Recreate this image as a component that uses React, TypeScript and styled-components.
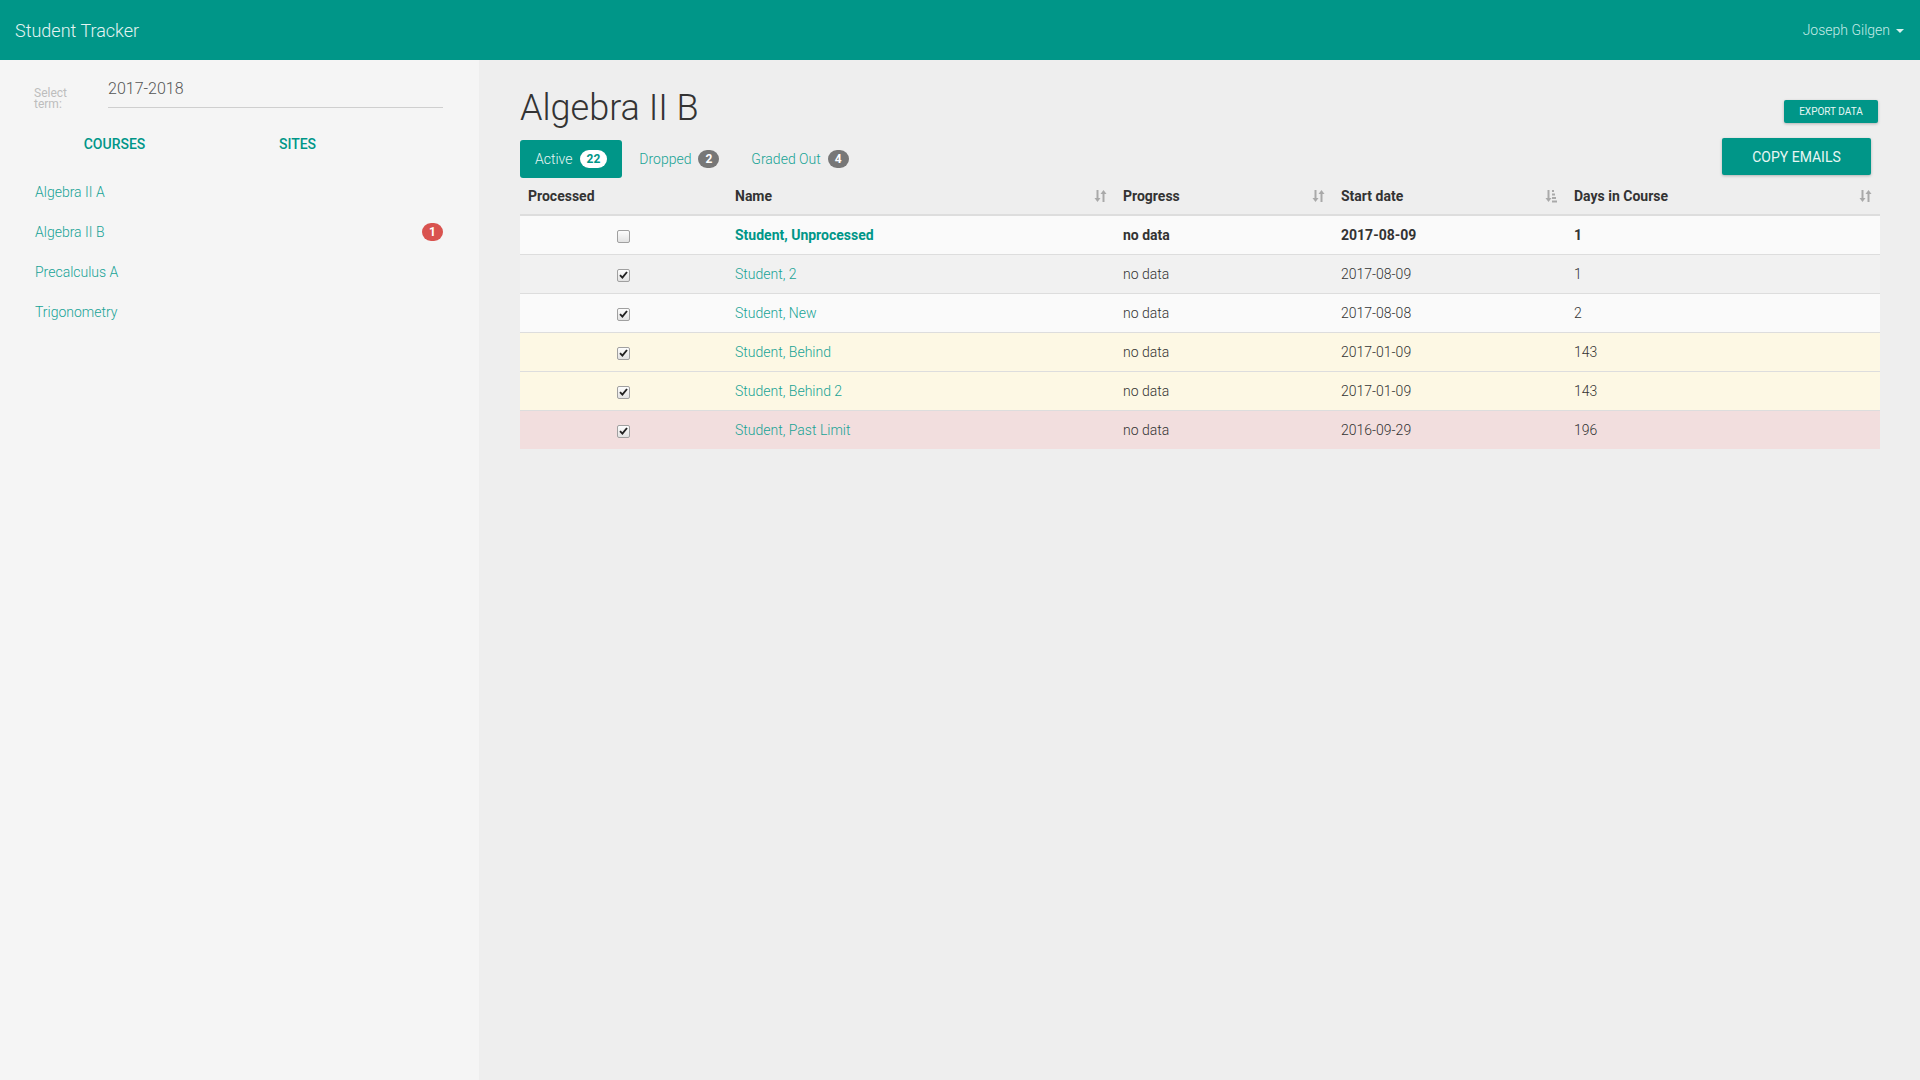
import React from "react";
import styled, { createGlobalStyle } from "styled-components";

const GlobalStyle = createGlobalStyle`
  html, body { margin: 0; padding: 0; }
  body {
    font-family: Roboto, "Noto Sans", "Liberation Sans", Arial, sans-serif;
    background: #eeeeee;
    color: #333;
  }
  * { box-sizing: border-box; }
`;

const TEAL = "#009688";
const LINK = "#17a395";

const Page = styled.div`
  min-height: 100vh;
  display: flex;
  flex-direction: column;
`;

const Navbar = styled.header`
  height: 60px;
  background: ${TEAL};
  display: flex;
  align-items: center;
  justify-content: space-between;
  padding: 0 16px 0 15px;
  flex-shrink: 0;
`;

const Brand = styled.div`
  font-size: 18px;
  font-weight: 300;
  color: #e4f4f2;
`;

const UserMenu = styled.div`
  display: flex;
  align-items: center;
  gap: 6px;
  font-size: 14px;
  font-weight: 300;
  color: #c6ebe7;
`;

const Caret = styled.span`
  width: 0;
  height: 0;
  border-left: 4px solid transparent;
  border-right: 4px solid transparent;
  border-top: 4px solid #d8f1ee;
  margin-top: 2px;
`;

const Body = styled.div`
  flex: 1;
  display: flex;
`;

const Sidebar = styled.aside`
  width: 479px;
  flex-shrink: 0;
  background: #f5f5f5;
  padding: 17px 36px 0 23px;
`;

const TermRow = styled.div`
  display: flex;
  align-items: flex-start;
  padding-left: 11px;
`;

const TermLabel = styled.div`
  width: 74px;
  margin-top: 11px;
  font-size: 12px;
  line-height: 11px;
  color: #bdbdbd;
`;

const TermInput = styled.div`
  flex: 1;
  height: 31px;
  line-height: 24px;
  font-size: 16px;
  font-weight: 300;
  color: #555;
  border-bottom: 1px solid #cfcfcf;
`;

const SideTabs = styled.nav`
  display: flex;
  margin-top: 14px;
`;

const SideTab = styled.div`
  width: 183px;
  height: 40px;
  display: flex;
  align-items: center;
  justify-content: center;
  font-size: 14px;
  font-weight: 500;
  color: ${TEAL};
  text-transform: uppercase;
`;

const CourseList = styled.ul`
  list-style: none;
  margin: 8px 0 0;
  padding: 0;
`;

const CourseItem = styled.li`
  height: 40px;
  display: flex;
  align-items: center;
  justify-content: space-between;
  padding-left: 12px;
  font-size: 14px;
  font-weight: 300;
  color: ${LINK};
`;

const Badge = styled.span<{ $bg: string; $fg: string }>`
  display: inline-flex;
  align-items: center;
  justify-content: center;
  min-width: 20px;
  height: 18px;
  padding: 0 7px;
  border-radius: 10px;
  background: ${(p) => p.$bg};
  color: ${(p) => p.$fg};
  font-size: 12px;
  font-weight: 700;
  line-height: 1;
`;

const Main = styled.main`
  flex: 1;
  background: #eeeeee;
  padding: 26px 40px 0 41px;
`;

const HeaderRow = styled.div`
  display: flex;
  justify-content: space-between;
  align-items: flex-start;
`;

const Title = styled.h1`
  margin: 0;
  font-size: 36px;
  line-height: 44px;
  font-weight: 300;
  color: #333;
`;

const RaisedButton = styled.button<{ $size: "small" | "large" }>`
  border: none;
  border-radius: 2px;
  background: ${TEAL};
  color: #e8f6f4;
  font-family: inherit;
  text-transform: uppercase;
  box-shadow: 0 1px 3px rgba(0, 0, 0, 0.25);
  cursor: pointer;
  ${(p) =>
    p.$size === "small"
      ? `height: 23px; width: 94px; font-size: 10px; margin-top: 14px; margin-right: 2px;`
      : `height: 37px; width: 149px; font-size: 14px; margin-right: 9px;`}
`;

const TabsRow = styled.div`
  display: flex;
  justify-content: space-between;
  align-items: flex-start;
  margin-top: 8px;
`;

const Tabs = styled.div`
  display: flex;
  gap: 2px;
  margin-top: 2px;
`;

const Tab = styled.div<{ $active?: boolean }>`
  height: 38px;
  display: flex;
  align-items: center;
  gap: 7px;
  padding: 0 15px;
  border-radius: 3px;
  font-size: 14px;
  font-weight: 300;
  background: ${(p) => (p.$active ? TEAL : "transparent")};
  color: ${(p) => (p.$active ? "#e6f5f3" : LINK)};
`;

const Table = styled.table`
  width: 100%;
  table-layout: fixed;
  border-collapse: collapse;
  font-size: 14px;
`;

const Th = styled.th`
  text-align: left;
  padding: 8px 8px;
  line-height: 20px;
  font-weight: 700;
  color: #333;
  border-bottom: 2px solid #dddddd;
`;

const ThInner = styled.div`
  display: flex;
  align-items: center;
  justify-content: space-between;
`;

const Tr = styled.tr<{ $tone: "odd" | "even" | "warning" | "danger" }>`
  background: ${(p) =>
    ({ odd: "#fafafa", even: "#f1f1f1", warning: "#fdf8e4", danger: "#f2dede" }[p.$tone])};
`;

const Td = styled.td<{ $bold?: boolean; $center?: boolean }>`
  padding: 8px 8px;
  line-height: 22px;
  border-top: 1px solid #dddddd;
  font-weight: ${(p) => (p.$bold ? 700 : 300)};
  color: #333;
  text-align: ${(p) => (p.$center ? "center" : "left")};
`;

const NameLink = styled.a<{ $bold?: boolean }>`
  color: ${(p) => (p.$bold ? TEAL : LINK)};
  font-weight: ${(p) => (p.$bold ? 700 : 300)};
  text-decoration: none;
`;

const CheckBox = styled.span`
  display: inline-flex;
  align-items: center;
  justify-content: center;
  width: 13px;
  height: 13px;
  vertical-align: middle;
  border: 1px solid #a0a0a0;
  border-radius: 2px;
  background: linear-gradient(#fdfdfd, #e2e2e2);
`;

const SortIcon = () => (
  <svg width="13" height="14" viewBox="0 0 13 14" aria-hidden="true">
    <g fill="#a9a9a9">
      <rect x="2.5" y="1" width="2" height="9" />
      <path d="M0.5 9 L6.5 9 L3.5 13 Z" />
      <rect x="8.5" y="4" width="2" height="9" />
      <path d="M6.5 5 L12.5 5 L9.5 1 Z" />
    </g>
  </svg>
);

const SortAttrIcon = () => (
  <svg width="13" height="14" viewBox="0 0 13 14" aria-hidden="true">
    <g fill="#a9a9a9">
      <rect x="2.5" y="1" width="2" height="9" />
      <path d="M0.5 9 L6.5 9 L3.5 13 Z" />
      <rect x="7" y="1" width="2" height="2" />
      <rect x="7" y="4.5" width="3" height="2" />
      <rect x="7" y="8" width="4" height="2" />
      <rect x="7" y="11.5" width="5" height="2" />
    </g>
  </svg>
);

const Check = ({ checked }: { checked: boolean }) => (
  <CheckBox>
    {checked && (
      <svg width="9" height="8" viewBox="0 0 9 8" aria-hidden="true">
        <path d="M1 4.2 L3.4 6.6 L8 1" stroke="#222" strokeWidth="1.9" fill="none" />
      </svg>
    )}
  </CheckBox>
);

type Tone = "odd" | "even" | "warning" | "danger";

const students: {
  name: string;
  processed: boolean;
  start: string;
  days: string;
  bold?: boolean;
  tone: Tone;
}[] = [
  { name: "Student, Unprocessed", processed: false, start: "2017-08-09", days: "1", bold: true, tone: "odd" },
  { name: "Student, 2", processed: true, start: "2017-08-09", days: "1", tone: "even" },
  { name: "Student, New", processed: true, start: "2017-08-08", days: "2", tone: "odd" },
  { name: "Student, Behind", processed: true, start: "2017-01-09", days: "143", tone: "warning" },
  { name: "Student, Behind 2", processed: true, start: "2017-01-09", days: "143", tone: "warning" },
  { name: "Student, Past Limit", processed: true, start: "2016-09-29", days: "196", tone: "danger" },
];

const courses = [
  { name: "Algebra II A" },
  { name: "Algebra II B", badge: "1" },
  { name: "Precalculus A" },
  { name: "Trigonometry" },
];

export default function App() {
  return (
    <Page>
      <GlobalStyle />
      <Navbar>
        <Brand>Student Tracker</Brand>
        <UserMenu>
          Joseph Gilgen <Caret />
        </UserMenu>
      </Navbar>
      <Body>
        <Sidebar>
          <TermRow>
            <TermLabel>
              Select
              <br />
              term:
            </TermLabel>
            <TermInput>2017-2018</TermInput>
          </TermRow>
          <SideTabs>
            <SideTab>Courses</SideTab>
            <SideTab>Sites</SideTab>
          </SideTabs>
          <CourseList>
            {courses.map((c) => (
              <CourseItem key={c.name}>
                <span>{c.name}</span>
                {c.badge && (
                  <Badge $bg="#d9534f" $fg="#fff">
                    {c.badge}
                  </Badge>
                )}
              </CourseItem>
            ))}
          </CourseList>
        </Sidebar>
        <Main>
          <HeaderRow>
            <Title>Algebra II B</Title>
            <RaisedButton $size="small">Export Data</RaisedButton>
          </HeaderRow>
          <TabsRow>
            <Tabs>
              <Tab $active>
                Active
                <Badge $bg="#fff" $fg={TEAL}>
                  22
                </Badge>
              </Tab>
              <Tab>
                Dropped
                <Badge $bg="#777" $fg="#fff">
                  2
                </Badge>
              </Tab>
              <Tab>
                Graded Out
                <Badge $bg="#777" $fg="#fff">
                  4
                </Badge>
              </Tab>
            </Tabs>
            <RaisedButton $size="large">Copy Emails</RaisedButton>
          </TabsRow>
          <Table>
            <colgroup>
              <col style={{ width: 207 }} />
              <col style={{ width: 388 }} />
              <col style={{ width: 218 }} />
              <col style={{ width: 233 }} />
              <col />
            </colgroup>
            <thead>
              <tr>
                <Th>Processed</Th>
                <Th>
                  <ThInner>
                    Name <SortIcon />
                  </ThInner>
                </Th>
                <Th>
                  <ThInner>
                    Progress <SortIcon />
                  </ThInner>
                </Th>
                <Th>
                  <ThInner>
                    Start date <SortAttrIcon />
                  </ThInner>
                </Th>
                <Th>
                  <ThInner>
                    Days in Course <SortIcon />
                  </ThInner>
                </Th>
              </tr>
            </thead>
            <tbody>
              {students.map((s) => (
                <Tr key={s.name} $tone={s.tone}>
                  <Td $center>
                    <Check checked={s.processed} />
                  </Td>
                  <Td>
                    <NameLink $bold={s.bold}>{s.name}</NameLink>
                  </Td>
                  <Td $bold={s.bold}>no data</Td>
                  <Td $bold={s.bold}>{s.start}</Td>
                  <Td $bold={s.bold}>{s.days}</Td>
                </Tr>
              ))}
            </tbody>
          </Table>
        </Main>
      </Body>
    </Page>
  );
}
